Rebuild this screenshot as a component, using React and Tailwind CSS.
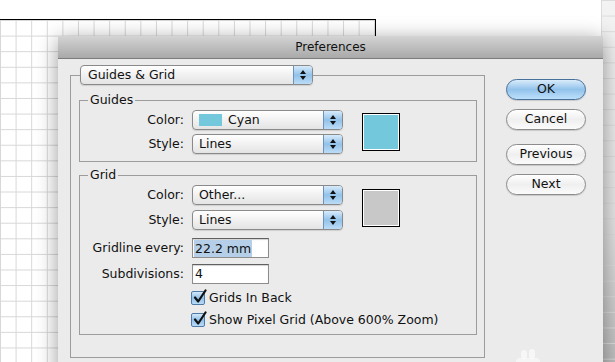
import React from 'react';

const gridBg =
  "bg-[linear-gradient(to_right,#d7d7d7_1px,transparent_1px),linear-gradient(to_bottom,#d7d7d7_1px,transparent_1px)] bg-[size:15.6px_15.6px]";

const Arrows = () => (
  <div className="flex w-[19px] flex-col items-center justify-center gap-[2px] border-l border-[#6b93bb] bg-linear-to-b from-[#d7ebfb] via-[#92c2ea] to-[#bcdcf7]">
    <svg width="6" height="4" viewBox="0 0 6 4"><path d="M3 0L6 4H0z" fill="#111" /></svg>
    <svg width="6" height="4" viewBox="0 0 6 4"><path d="M0 0H6L3 4z" fill="#111" /></svg>
  </div>
);

const Popup = ({ width, pad, children }) => (
  <div className={`flex h-[20px] ${width} overflow-hidden rounded-[4px] border border-[#8a8a8a] bg-linear-to-b from-white via-[#f1f1f1] to-[#e4e4e4] shadow-[0_1px_1px_rgba(0,0,0,0.12)]`}>
    <div className={`flex flex-1 items-center gap-[6px] ${pad}`}>{children}</div>
    <Arrows />
  </div>
);

const Field = ({ children }) => (
  <div className="flex h-[20px] w-[77px] items-center border border-[#8d8d8d] border-t-[#616161] bg-white pl-[1px] shadow-[inset_0_1px_1px_rgba(0,0,0,0.18)]">
    {children}
  </div>
);

const Check = ({ label }) => (
  <div className="flex items-center gap-[4px] pl-[111px]">
    <div className="relative h-[14px] w-[14px] rounded-[2px] border border-[#4f7aa6] bg-linear-to-b from-[#d2e8fa] via-[#8fc0ea] to-[#b8dbf8]">
      <svg className="absolute -top-[3px] left-[1px]" width="14" height="15" viewBox="0 0 14 15">
        <path d="M2 8.5L5.2 12.5L12.5 1.5" fill="none" stroke="#111" strokeWidth="2.2" strokeLinecap="round" strokeLinejoin="round" />
      </svg>
    </div>
    <span>{label}</span>
  </div>
);

const Row = ({ label, children, className = '' }) => (
  <div className={`flex items-center gap-[8px] ${className}`}>
    <span className="w-[104px] text-right">{label}</span>
    {children}
  </div>
);

const Button = ({ primary, children, className = '' }) => (
  <div
    className={`flex h-[21px] w-[80px] items-center justify-center rounded-full border shadow-[0_1px_1px_rgba(0,0,0,0.15)] ${
      primary
        ? 'border-[#47709a] bg-linear-to-b from-[#d9ecfb] via-[#92c2ea] to-[#bde0fb]'
        : 'border-[#8c8c8c] bg-linear-to-b from-white via-[#efefef] to-[#fbfbfb]'
    } ${className}`}
  >
    {children}
  </div>
);

export default function App() {
  return (
    <div className="relative h-[362px] w-[615px] overflow-hidden bg-white font-['DejaVu_Sans',sans-serif] text-[12.5px] text-[#111]">
      {/* document canvas */}
      <div className={`absolute left-0 top-[19px] h-[343px] w-[376px] border-t border-r border-black ${gridBg}`} />
      <div className="absolute left-[601px] top-0 h-[362px] w-[14px] bg-[linear-gradient(to_right,#dcdcdc_1px,transparent_1px),linear-gradient(to_bottom,#dcdcdc_1px,transparent_1px),linear-gradient(to_bottom,#f3f3f3,#e4e4e4_60%,#bdbdbd)] bg-[size:15.6px_15.6px,15.6px_15.6px,100%_100%]" />

      {/* dialog */}
      <div className="absolute left-[58px] top-[36px] h-[340px] w-[545px] bg-[#ebebeb] shadow-[0_4px_20px_rgba(0,0,0,0.4)]">
        <div className="flex h-[23px] items-center justify-center border-b border-[#7c7c7c] bg-linear-to-b from-[#d4d4d4] to-[#a9a9a9] text-[12px]">
          Preferences
        </div>

        <div className="flex pl-[12px] pt-[6px]">
          <fieldset className="w-[415px] border border-[#9c9c9c] pb-[22px] pl-[8px] pr-[7px] pt-[8px]">
            <legend className="ml-[1px]">
              <Popup width="w-[233px]" pad="pl-[7px]">Guides &amp; Grid</Popup>
            </legend>

            <fieldset className="border border-[#9c9c9c] pb-[7px] pt-[3px]">
              <legend className="ml-[8px] px-[2px] leading-[14px]">Guides</legend>
              <div className="flex items-center gap-[19px]">
                <div className="flex flex-col gap-[4px]">
                  <Row label="Color:">
                    <Popup width="w-[151px]" pad="pl-[6px]">
                      <span className="h-[12px] w-[23px] bg-[#74c8dc]" />
                      Cyan
                    </Popup>
                  </Row>
                  <Row label="Style:">
                    <Popup width="w-[151px]" pad="pl-[6px]">Lines</Popup>
                  </Row>
                </div>
                <div className="h-[38px] w-[38px] border border-black bg-[#74c8dc] shadow-[inset_0_0_0_1px_#fff]" />
              </div>
            </fieldset>

            <fieldset className="mt-[6px] border border-[#9c9c9c] pb-[4px] pt-[3px]">
              <legend className="ml-[8px] px-[2px] leading-[14px]">Grid</legend>
              <div className="flex items-center gap-[19px]">
                <div className="flex flex-col gap-[5px]">
                  <Row label="Color:">
                    <Popup width="w-[151px]" pad="pl-[6px]">Other...</Popup>
                  </Row>
                  <Row label="Style:">
                    <Popup width="w-[151px]" pad="pl-[6px]">Lines</Popup>
                  </Row>
                </div>
                <div className="h-[38px] w-[38px] border border-black bg-[#c8c8c8] shadow-[inset_0_0_0_1px_#fff]" />
              </div>
              <Row label="Gridline every:" className="mt-[8px]">
                <Field>
                  <span className="bg-[#b6cfe8] px-[1px] leading-[17px]">22.2 mm</span>
                </Field>
              </Row>
              <Row label="Subdivisions:" className="mt-[6px]">
                <Field>
                  <span className="px-[1px]">4</span>
                </Field>
              </Row>
              <div className="mt-[5px] flex flex-col gap-[3px]">
                <Check label="Grids In Back" />
                <Check label="Show Pixel Grid (Above 600% Zoom)" />
              </div>
            </fieldset>
          </fieldset>

          <div className="ml-[21px] flex flex-col pt-[14px]">
            <Button primary>OK</Button>
            <Button className="mt-[9px]">Cancel</Button>
            <Button className="mt-[14px]">Previous</Button>
            <Button className="mt-[9px]">Next</Button>
          </div>
        </div>

        {/* faint paw watermark */}
        <div className="absolute left-[463px] top-[314px] h-[9px] w-[6px] rounded-full bg-white/60" />
        <div className="absolute left-[471px] top-[313px] h-[10px] w-[6px] rounded-full bg-white/60" />
        <div className="absolute left-[458px] top-[322px] h-[8px] w-[24px] rounded-full bg-white/50" />
      </div>
    </div>
  );
}
